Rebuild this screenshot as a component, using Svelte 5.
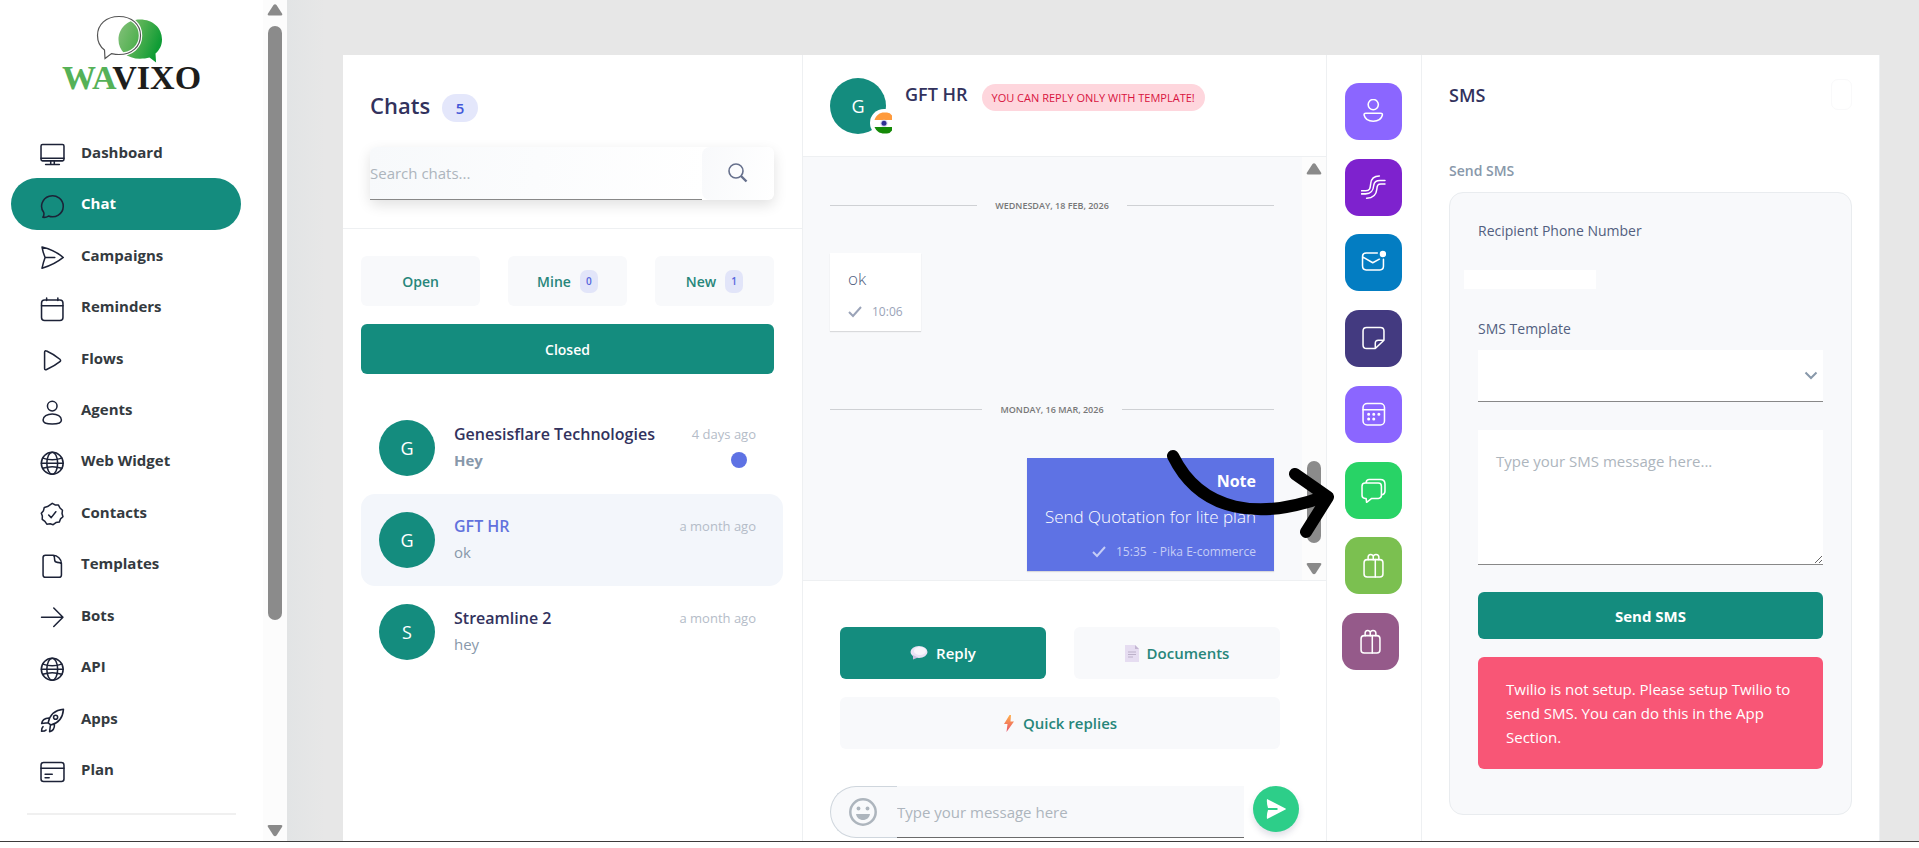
<script>
  const nav = [
    ['Dashboard', 'monitor'],
    ['Chat', 'bubble'],
    ['Campaigns', 'send'],
    ['Reminders', 'calendar'],
    ['Flows', 'play'],
    ['Agents', 'person'],
    ['Web Widget', 'globe'],
    ['Contacts', 'verified'],
    ['Templates', 'file'],
    ['Bots', 'arrow'],
    ['API', 'globe'],
    ['Apps', 'rocket'],
    ['Plan', 'card']
  ];

  const icons = {
    monitor: '<rect x="1" y="2.5" width="22.500" height="16" rx="1.500"/><path d="M1 16h22.500M10.500 18.500v3M14 18.500v3M5.500 22h13.500"/>',
    bubble: '<path d="M2.800 22.800c.9-1.300 1.300-3 .9-4.600A10.600 10.300 0 1 1 8.300 21.600c-1.500 1-3.500 1.500-5.500 1.200z"/>',
    send: '<path d="M2 2c6.500 1.700 15.500 5.500 20.800 10.200C17.500 16.500 9 20.800 2 22.800c.7-3.600 1.600-7 3-10.600C3.600 8.800 2.600 5.500 2 2zM5 12.200h9.500"/>',
    calendar: '<rect x="1.500" y="3" width="21" height="20" rx="3"/><path d="M1.500 8.500h21M6.500 1v2.500M17.500 1v2.500"/>',
    play: '<path d="M4.500 4.200c0-1.300 1-1.700 2-1.200 4.800 2.200 9 4.700 13 8 .9.800.9 1.700 0 2.400-3.900 3.200-8.200 5.500-13 7.700-1.100.5-2 .1-2-1.100z"/>',
    person: '<circle cx="12" cy="6" r="4.700"/><path d="M3 19.500c0-3.300 4-5.800 9-5.800s9 2.500 9 5.800c0 2.600-2.500 4-9 4s-9-1.400-9-4z"/>',
    globe: '<circle cx="12" cy="12" r="10.700"/><ellipse cx="12" cy="12" rx="5.300" ry="10.700"/><path d="M2.600 7c6 2 12.800 2 18.800 0M2.600 17c6-2 12.800-2 18.800 0M1.300 12h21.400"/>',
    verified: '<path d="M12 1.300l2.800 1.600 3.300.1 1.500 2.900 2.400 2.200-.4 3.200.9 3.100-2.400 2.200-1.200 3.100-3.300.5-2.700 2-2.900-.9-3.300.4-1.900-2.700-2.600-1.900.1-3.300L1.300 11l2.100-2.500.8-3.200 3.200-.8z"/><path d="M8.500 12.700l2.500 2.600 4.500-5.800"/>',
    file: '<path d="M3 3.500C3 1.800 3.600 1.200 5.300 1.200h7.700c4 0 8 3.800 8 8v11.300c0 1.700-.7 2.300-2.300 2.300H5.300C3.600 22.800 3 22.200 3 20.500zM13 1.200c1.500 1 1.300 3 1.300 4.300 0 2 .7 2.700 2.700 2.700 1.500 0 3 0 4 1.500"/>',
    arrow: '<path d="M1.500 12h21M13.500 3l9 9-9 9"/>',
    rocket: '<path d="M8 14.500C9.500 7.500 14.500 2 23 1.300c-.7 8.200-5.500 13.800-12.500 15.300zM8.800 9.700c-4 .2-6.800 2.100-7.200 5.600l6.200-.8M14.200 15.600c.2 4-1.500 6.700-4.800 7.600l.8-6.400M3 18.300c-1 .8-1.500 2.700-1.500 4.500 1.800 0 3.700-.2 4.500-1.200"/><circle cx="15.300" cy="9" r="2"/>',
    card: '<rect x="1" y="2.500" width="22.500" height="18.500" rx="2.500"/><path d="M1 8h22.500M5 14h7M5 17.300h4"/>',
    user2: '<circle cx="12" cy="5.500" r="5"/><path d="M4.800 14h14.400c1.500 0 2 .7 1.700 1.900-.8 3.300-4 5.800-8.900 5.800s-8.100-2.500-8.900-5.800c-.3-1.200.2-1.900 1.700-1.900z"/>',
    waves: '<path d="M.5 15.500h4c4.500 0 4.500-3 5-7C10 3.500 13.500 1 18 1M.5 18.500h4c6 0 7.500-3.500 8-8.500.5-3.500 2.500-4.700 6-4.700h5M5.500 22.700c6 0 9.500-3 10-8.700.3-4 1-5.200 4-5.200h4"/>',
    mail: '<path d="M16 3H5C2.500 3 1.500 4.200 1.500 6.500v9C1.500 18 2.700 19.500 5 19.500h13.500c2.500 0 3.500-1.300 3.500-3.500V9M2 7l9.500 5.500L18 9"/><circle cx="21.500" cy="4" r="2.400" fill="currentColor"/>',
    note: '<path d="M22.500 14V5c0-2.200-1-3.500-3.500-3.500H5.500C3 1.500 2 2.800 2 5v13.500C2 21 3 22 5.500 22H14zM14 22v-5c0-2.200 1-3 3-3h5.500"/>',
    agenda: '<rect x="2" y="1.500" width="21" height="21" rx="4"/><path d="M2 7.500h21"/><path d="M7.500 12h.01M12.500 12h.01M17.500 12h.01M7.500 16.700h.01M12.500 16.700h.01" stroke-width="3"/>',
    chats: '<path d="M4 5h13c2 0 3 1 3 3v9c0 2-1 3-3 3h-6.500L5.500 23.800 5 20H4c-2 0-3-1-3-3V8c0-2 1-3 3-3zM5 4.500c.2-2 1.200-3 3-3h11c3 0 4.500 1.500 4.500 4.500v7c0 2-.8 3-2.800 3.300"/>',
    gift: '<rect x="3" y="6.500" width="18.500" height="17" rx="3"/><path d="M14 6.500v17M7 6.500V4c0-3 5-3.500 5 0v2.500M12 6.500V4c0-3.500 5.500-3 5.500 0v2.500"/>'
  };

  const chats = [
    { initial: 'G', name: 'Genesisflare Technologies', text: 'Hey', time: '4 days ago', unread: true },
    { initial: 'G', name: 'GFT HR', text: 'ok', time: 'a month ago', active: true },
    { initial: 'S', name: 'Streamline 2', text: 'hey', time: 'a month ago' }
  ];

  const tools = [
    ['Contact', 'user2', '#8b66ff'],
    ['Streams', 'waves', '#7e22ce'],
    ['Email', 'mail', '#037dc2'],
    ['Notes', 'note', '#433a80'],
    ['Calendar', 'agenda', '#8b66ff'],
    ['SMS', 'chats', '#28d366'],
    ['Shopify', 'gift', '#7bc050'],
    ['WooCommerce', 'gift', '#955a8a']
  ];
</script>

{#snippet icon(name, size, weight)}
  <svg class="icon" width={size} height={size} viewBox="0 0 24.500 24.500" fill="none" stroke="currentColor" stroke-width={weight} stroke-linecap="round" stroke-linejoin="round" aria-hidden="true">{@html icons[name]}</svg>
{/snippet}

{#snippet tick()}
  <svg width="14" height="12" viewBox="0 0 14 12" fill="none" stroke="currentColor" stroke-width="2" aria-hidden="true"><path d="M1 6l4 4 8-9" /></svg>
{/snippet}

{#snippet scrollArrow(down)}
  <svg width="16" height="12" viewBox="0 0 16 12" fill="#8a8a8a" aria-hidden="true">
    {#if down}<path d="M2 0h12q2 0 1 2L9.500 10.500q-1.500 1.500-3 0L1 2Q0 0 2 0z" />
    {:else}<path d="M2 11.500h12q2 0 1-2L9.500 1Q8-.5 6.500 1L1 9.500q-1 2 1 2z" />{/if}
  </svg>
{/snippet}

<div class="page">
  <div class="shell">
    <aside class="sidebar">
      <div class="menu">
        <a class="logo" href="#home">
          <svg width="68" height="50" viewBox="97 14 68 50" overflow="visible" aria-hidden="true">
            <defs>
              <linearGradient id="leaf" x1="0" y1="0" x2="1" y2="0.400">
                <stop offset="0" stop-color="#86c17c" />
                <stop offset="0.500" stop-color="#56b254" />
                <stop offset="1" stop-color="#0f9c35" />
              </linearGradient>
            </defs>
            <path d="M139 19.500c13 0 22 8.500 22 20 0 6-2.500 10.500-6.500 14l.6 9-6.600-5c-3 .8-6 1.200-9.500 1.200-13 0-21.500-8-21.500-19s8.500-20.200 21.500-20.200z" fill="url(#leaf)" />
            <path d="M118 16.500c13 0 21.500 8 21.500 19s-8.500 19-21.500 19c-3 0-5.500-.5-7.500-.9l-6.500 5-.5-8.600C99.500 47 96.500 41.500 96.500 35.500c0-11 8.500-19 21.500-19z" fill="none" stroke="#fff" stroke-width="3.500" />
            <path d="M118 16.500c13 0 21.500 8 21.500 19s-8.500 19-21.500 19c-3 0-5.500-.5-7.500-.9l-6.500 5-.5-8.600C99.500 47 96.500 41.500 96.500 35.500c0-11 8.500-19 21.500-19z" fill="none" stroke="#555" stroke-width="1.200" />
          </svg>
          <span class="wordmark"><span class="green">WA</span>VIXO</span>
        </a>
        <nav>
          {#each nav as [label, name]}
            <a href="#{name}" class:current={label === 'Chat'}>
              {@render icon(name, 25, 1.5)}
              <span>{label}</span>
            </a>
          {/each}
        </nav>
        <hr />
      </div>
      <div class="scroll">
        {@render scrollArrow(false)}
        <div class="thumb tall"></div>
        {@render scrollArrow(true)}
      </div>
    </aside>

    <main>
      <section class="chats">
        <header>
          <div class="title">
            <h1>Chats</h1>
            <span class="count">5</span>
          </div>
          <form class="search">
            <input type="text" placeholder="Search chats..." aria-label="Search chats" />
            <button type="button" aria-label="Search">
              <svg width="20" height="20" viewBox="0 0 20 20" fill="none" stroke="#66708c" aria-hidden="true">
                <circle cx="8" cy="8" r="7" stroke-width="1.600" />
                <path d="M13 13l5.500 5.500" stroke-width="2.400" />
              </svg>
            </button>
          </form>
        </header>
        <div class="filters">
          <button type="button">Open</button>
          <button type="button">Mine <span class="mini">0</span></button>
          <button type="button">New <span class="mini">1</span></button>
          <button type="button" class="primary wide">Closed</button>
        </div>
        <ul class="list">
          {#each chats as c}
            <li class:active={c.active}>
              <span class="avatar">{c.initial}</span>
              <div class="who">
                <strong>{c.name}</strong>
                <span class:unread={c.unread}>{c.text}</span>
              </div>
              <div class="when">
                <time>{c.time}</time>
                {#if c.unread}<i class="dot"></i>{/if}
              </div>
            </li>
          {/each}
        </ul>
      </section>

      <section class="talk">
        <header>
          <span class="avatar">
            G
            <svg class="flag" width="22" height="28" viewBox="0 0 22 28" aria-hidden="true">
              <path d="M22 0H14A14 14 0 0 0 14 28H22z" fill="#fff" />
              <path d="M4.500 11C6 6 10 3.500 14 3.500h3q3 0 5 3V11z" fill="#ff9a3c" />
              <path d="M4.500 18H22v3.500q-2 3-5 3h-3C10 24.500 6.500 22.500 4.500 18z" fill="#158a08" />
              <circle cx="14" cy="14.300" r="3.600" fill="#d9d9ef" />
              <circle cx="14" cy="14.300" r="2.500" fill="#2f2f93" />
            </svg>
          </span>
          <h2>GFT HR</h2>
          <span class="warn">YOU CAN REPLY ONLY WITH TEMPLATE!</span>
        </header>
        <div class="history">
          <div class="messages">
            <div class="day"><span>WEDNESDAY, 18 FEB, 2026</span></div>
            <div class="msg">
              <p>ok</p>
              <small>{@render tick()} 10:06</small>
            </div>
            <div class="day"><span>MONDAY, 16 MAR, 2026</span></div>
            <div class="msg note">
              <b>Note</b>
              <p>Send Quotation for lite plan</p>
              <small>{@render tick()} 15:35 &nbsp;- Pika E-commerce</small>
            </div>
          </div>
          <div class="scroll">
            {@render scrollArrow(false)}
            <div class="thumb short"></div>
            {@render scrollArrow(true)}
          </div>
        </div>
        <div class="actions">
          <button type="button" class="primary">
            <svg width="18" height="14" viewBox="0 0 18 14" aria-hidden="true">
              <ellipse cx="9" cy="6" rx="8.500" ry="6" fill="#e9e2f4" />
              <path d="M3 9v4.500l5-2z" fill="#cbbfe0" />
              <ellipse cx="10" cy="5" rx="6" ry="4" fill="#f8f5fc" />
            </svg>
            Reply
          </button>
          <button type="button">
            <svg width="14" height="17" viewBox="0 0 14 17" aria-hidden="true">
              <path d="M0 0h10l4 4v13H0z" fill="#e6ddf1" />
              <path d="M10 0v4h4z" fill="#c3b6d2" />
              <path d="M3 7h8M3 9.500h8M3 12h5" stroke="#bcb1c9" />
            </svg>
            Documents
          </button>
          <button type="button" class="wide">
            <svg width="12" height="17" viewBox="0 0 12 17" aria-hidden="true">
              <defs>
                <linearGradient id="bolt" x2="0" y2="1">
                  <stop offset="0" stop-color="#ffb04a" />
                  <stop offset="1" stop-color="#e8506a" />
                </linearGradient>
              </defs>
              <path d="M6.500 0L1 9h3.500L3.500 17 11 6.500H7.500L8 0z" fill="url(#bolt)" />
            </svg>
            Quick replies
          </button>
        </div>
        <form class="compose">
          <button type="button" class="smile" aria-label="Emoji">
            <svg width="28" height="28" viewBox="0 0 28 28" aria-hidden="true">
              <circle cx="14" cy="14" r="12.700" fill="none" stroke="#adb5bd" stroke-width="2.500" />
              <circle cx="9.500" cy="10.500" r="1.900" fill="#adb5bd" />
              <circle cx="18.500" cy="10.500" r="1.900" fill="#adb5bd" />
              <path d="M7 16h14c-.6 3.700-3.500 6-7 6s-6.400-2.300-7-6z" fill="#adb5bd" />
            </svg>
          </button>
          <input type="text" placeholder="Type your message here" aria-label="Message" />
          <button type="button" class="send" aria-label="Send">
            <svg width="20" height="20" viewBox="0 0 20 20" fill="#fff" aria-hidden="true">
              <path d="M1 0l18.500 9.500c.6.300.6.700 0 1L1 20c-.4-3.300 0-6 1-9h9.500V9H2C1 6 .6 3 1 0z" />
            </svg>
          </button>
        </form>
      </section>

      <section class="tools" aria-label="Side apps">
        {#each tools as [label, name, color]}
          <button type="button" aria-label={label} style:background={color}>{@render icon(name, 25, 1.5)}</button>
        {/each}
      </section>

      <section class="sms">
        <header>
          <h2>SMS</h2>
          <button type="button" class="close" aria-label="Close"></button>
        </header>
        <h3>Send SMS</h3>
        <form class="panel">
          <span class="caption">Recipient Phone Number</span>
          <div class="phone"></div>
          <label for="template">SMS Template</label>
          <div class="select">
            <select id="template"><option></option></select>
            <svg width="14" height="10" viewBox="0 0 14 10" fill="none" stroke="#8898aa" stroke-width="2" aria-hidden="true"><path d="M1.500 1.500L7 7l5.500-5.500" /></svg>
          </div>
          <textarea placeholder="Type your SMS message here..." aria-label="SMS message"></textarea>
          <button type="button" class="primary">Send SMS</button>
          <p class="alert">Twilio is not setup. Please setup Twilio to send SMS. You can do this in the App Section.</p>
        </form>
      </section>
      <svg class="pointer" width="176" height="96" viewBox="0 0 176 96" fill="none" stroke="#000" stroke-width="12" stroke-linecap="round" stroke-linejoin="round" aria-hidden="true">
        <path d="M10 10C38 67 97 74 160 51" />
        <path d="M132 28l33 23-22 35" />
      </svg>
    </main>
  </div>
</div>

<style>
  :global(body) {
    margin: 0;
    overflow: hidden;
  }
  .page, .page * {
    box-sizing: border-box;
  }
  .page {
    --teal: #148c7e;
    --soft: #f8f9fb;
    --line: #eef0f2;
    --ink: #32325d;
    height: 100vh;
    padding-bottom: 6px;
    background: #fff;
    font-family: "Open Sans", "Noto Sans", sans-serif;
    font-size: 15px;
    color: #525f7f;
  }
  button, input, select, textarea {
    font: inherit;
    border: 0;
    outline: 0;
  }
  button {
    cursor: pointer;
    padding: 0;
  }
  h1, h2, h3, p, ul {
    margin: 0;
    padding: 0;
    font-weight: 400;
  }
  svg {
    flex: none;
    display: block;
  }
  .shell {
    display: flex;
    height: 100%;
    overflow: hidden;
    border-bottom: 1px solid #3c3c3c;
    background: linear-gradient(90deg, #e2e4e5 287px, #e7e7e7 325px);
  }

  .sidebar {
    flex: none;
    width: 287px;
    display: flex;
    background: #fff;
  }
  .menu {
    flex: 1;
  }
  .logo {
    display: flex;
    flex-direction: column;
    align-items: center;
    height: 127px;
    padding: 14px 0 0;
    text-decoration: none;
  }
  .wordmark {
    font: bold 34px/28px "Liberation Serif", serif;
    color: #1d1d1b;
  }
  .green {
    color: #55b157;
  }
  nav {
    display: grid;
    grid-auto-rows: 1fr;
    height: 669px;
    padding: 0 22px 0 11px;
  }
  nav a {
    display: flex;
    align-items: center;
    gap: 16px;
    padding: 0 0 2px 29px;
    border-radius: 26px;
    font-weight: 700;
    color: #343a40;
    text-decoration: none;
  }
  nav .icon {
    margin-top: 6px;
    color: #1c2237;
  }
  nav .current {
    background: var(--teal);
    color: #fff;
  }
  hr {
    margin: 17px 27px 0;
    border: 0;
    border-top: 2px solid #f0f0f0;
  }
  .scroll {
    flex: none;
    width: 24px;
    display: flex;
    flex-direction: column;
    align-items: center;
    padding: 4px 0;
    background: #fcfcfc;
  }
  .thumb {
    width: 14px;
    border-radius: 7px;
    background: #8b8b8b;
    margin: 10px 0 auto;
  }
  .tall {
    height: calc(100% - 239px);
  }
  .short {
    height: 82px;
    margin: auto 0 20px;
  }

  main {
    position: relative;
    flex: 1;
    display: grid;
    grid-template-columns: 460fr 524fr 94fr 459fr;
    margin: 55px 39px 0 56px;
    background: #fff;
  }
  section {
    min-width: 0;
    border-right: 1px solid var(--line);
  }
  .avatar {
    flex: none;
    position: relative;
    width: 56px;
    height: 56px;
    display: grid;
    place-items: center;
    border-radius: 50%;
    background: var(--teal);
    color: #fff;
    font-size: 18px;
  }

  .chats header {
    height: 174px;
    padding: 34px 28px 0 27px;
    border-bottom: 1px solid var(--line);
  }
  .title {
    display: flex;
    align-items: center;
    gap: 12px;
    height: 32px;
  }
  h1 {
    font-size: 22px;
    line-height: 32px;
    font-weight: 600;
    color: var(--ink);
  }
  .count {
    width: 36px;
    margin-top: 5px;
    border-radius: 14px;
    background: #e4e7fb;
    color: #4357d8;
    font-weight: 600;
    line-height: 28px;
    text-align: center;
  }
  .search {
    display: flex;
    height: 53px;
    margin-top: 26px;
    border-radius: 6px;
    box-shadow: 0 5px 14px rgba(0, 0, 0, .12);
  }
  .search input {
    flex: 1;
    min-width: 0;
    padding: 0;
    border-bottom: 1px solid #888;
    border-radius: 6px 0 0 0;
    background: linear-gradient(100deg, #f7f9fb, #fff);
  }
  ::placeholder {
    color: #adb5bd;
    opacity: 1;
  }
  .search button {
    display: grid;
    place-items: center;
    width: 72px;
    padding-bottom: 2px;
    border-radius: 8px;
    background: linear-gradient(100deg, #f8f9fb, #fff);
  }
  .filters {
    display: grid;
    grid-template-columns: repeat(3, 1fr);
    gap: 18px 28px;
    padding: 27px 28px 28px 18px;
  }
  .filters button, .actions button, .panel button {
    display: flex;
    align-items: center;
    justify-content: center;
    height: 50px;
    border-radius: 6px;
    background: var(--soft);
    color: #27867a;
    font-size: 14px;
    font-weight: 600;
  }
  .page .primary {
    background: var(--teal);
    color: #fff;
  }
  .page .wide {
    grid-column: 1 / -1;
  }
  .mini {
    min-width: 18px;
    margin-left: 9px;
    border-radius: 7px;
    background: #e2e5f9;
    color: #5566dd;
    font-size: 10px;
    line-height: 23px;
    text-align: center;
  }
  .list {
    list-style: none;
    padding: 0 19px 0 18px;
  }
  .list li {
    display: flex;
    gap: 19px;
    height: 92px;
    padding: 18px 27px 18px 18px;
    border-radius: 14px;
  }
  .list .active {
    background: #f3f6fb;
  }
  .who, .when {
    display: flex;
    flex-direction: column;
    gap: 2px;
    padding-top: 2px;
    line-height: 24px;
    color: #8898aa;
    white-space: nowrap;
  }
  .who {
    flex: 1;
    min-width: 0;
  }
  .who strong {
    font-size: 16px;
    font-weight: 600;
    color: var(--ink);
  }
  .list .active strong {
    color: #6272dd;
  }
  .unread {
    font-weight: 700;
  }
  .when {
    align-items: flex-end;
    font-size: 13px;
    color: #b4bcc8;
  }
  .dot {
    width: 16px;
    height: 16px;
    margin: 4px 9px;
    border-radius: 50%;
    background: #5e72e4;
  }

  .talk {
    display: flex;
    flex-direction: column;
  }
  .talk header {
    display: flex;
    align-items: flex-start;
    height: 102px;
    padding: 23px 27px;
    border-bottom: 1px solid var(--line);
  }
  .flag {
    position: absolute;
    right: -6px;
    bottom: -3px;
  }
  h2 {
    font-size: 18px;
    line-height: 32px;
    font-weight: 600;
    color: var(--ink);
  }
  .talk h2 {
    margin: 0 14px 0 19px;
  }
  .warn {
    margin-top: 6px;
    padding: 0 10px;
    border-radius: 14px;
    background: #fed6dd;
    color: #d8143f;
    font-size: 11px;
    line-height: 27px;
    white-space: nowrap;
  }
  .history {
    display: flex;
    height: 424px;
    background: var(--soft);
    border-bottom: 1px solid var(--line);
  }
  .history .scroll {
    padding: 6px 0 5px;
  }
  .messages {
    flex: 1;
    display: flex;
    flex-direction: column;
    align-items: flex-start;
    padding: 38px 28px 0 27px;
  }
  .day {
    align-self: stretch;
    display: flex;
    align-items: center;
    gap: 18px;
    height: 20px;
    color: #777;
    font-size: 9px;
    font-weight: 600;
    white-space: nowrap;
  }
  .day::before, .day::after {
    content: "";
    flex: 1;
    height: 1px;
    background: #cfd1d4;
  }
  .msg {
    height: 78px;
    margin: 38px 0 68px;
    padding: 12px 18px;
    background: #fff;
    box-shadow: 0 1px 1px rgba(0, 0, 0, .12);
  }
  .msg p {
    font-size: 17px;
    line-height: 28px;
    font-weight: 300;
  }
  .msg small {
    display: flex;
    align-items: center;
    gap: 10px;
    margin-top: 9px;
    font-size: 12px;
    line-height: 20px;
    color: #9aa3b8;
    white-space: nowrap;
  }
  .page .note {
    align-self: flex-end;
    height: 113px;
    padding: 11px 18px;
    background: #5e72e4;
    color: #fff;
    text-align: right;
  }
  .note b {
    display: block;
    font-size: 16px;
    line-height: 24px;
  }
  .note p {
    margin-top: 10px;
  }
  .note small {
    justify-content: flex-end;
    margin-top: 11px;
    color: #c5cdf6;
  }
  .day + .note {
    margin: 39px 0 0;
  }
  .actions {
    display: grid;
    grid-template-columns: 1fr 1fr;
    gap: 18px 28px;
    padding: 46px 46px 37px 37px;
  }
  .actions button {
    gap: 8px;
    height: 52px;
    font-size: 15px;
  }
  .compose {
    display: flex;
    height: 52px;
    padding: 0 27px;
  }
  .compose input {
    flex: 1;
    min-width: 0;
    padding: 0;
    border-bottom: 1px solid #6b6b6b;
    background: var(--soft);
  }
  .smile {
    width: 67px;
    padding-left: 18px;
    border: solid #cfd6dd;
    border-width: 1px 0 1px 1px;
    border-radius: 26px 0 0 26px;
    background: var(--soft);
  }
  .send {
    display: grid;
    place-items: center;
    width: 46px;
    height: 46px;
    margin-left: 9px;
    border-radius: 50%;
    background: #2dce89;
    box-shadow: 0 4px 6px rgba(50, 50, 93, .15);
  }

  .tools {
    display: flex;
    flex-direction: column;
    justify-content: space-between;
    height: 615px;
    padding: 28px 18px 0 18px;
    border: 0;
  }
  .tools button {
    display: grid;
    place-items: center;
    width: 57px;
    height: 57px;
    border-radius: 14px;
    color: #fff;
  }
  .tools button:last-child {
    margin-left: -3px;
  }

  .sms {
    padding: 24px 27px;
    border-left: 1px solid var(--line);
  }
  .sms header {
    display: flex;
    justify-content: space-between;
    height: 78px;
  }
  .close {
    width: 21px;
    height: 31px;
    border: 1px solid #f9f9fa;
    border-radius: 7px;
    background: #fff;
  }
  h3 {
    font-size: 14px;
    line-height: 28px;
    font-weight: 600;
    color: #8898aa;
  }
  .panel {
    display: flex;
    flex-direction: column;
    height: 623px;
    margin-top: 7px;
    padding: 26px 28px;
    border: 1px solid #e9ecef;
    border-radius: 14px;
    background: var(--soft);
  }
  .caption, label {
    font-size: 14px;
    line-height: 24px;
  }
  .phone {
    width: 132px;
    height: 19px;
    margin: 27px 0 28px -14px;
    background: #fff;
  }
  .select {
    display: grid;
    align-items: center;
    justify-items: end;
    margin: 9px 0 28px;
  }
  .select > * {
    grid-area: 1 / 1;
  }
  .select svg {
    margin-right: 5px;
    pointer-events: none;
  }
  select {
    width: 100%;
    height: 52px;
    appearance: none;
    border-bottom: 1px solid #888;
    background: #fff;
  }
  textarea {
    height: 135px;
    padding: 19px 18px;
    border-bottom: 1px solid #888;
    background: #fff;
    line-height: 24px;
  }
  .panel button {
    height: 47px;
    margin: 27px 0 18px;
    font-size: 15px;
    font-weight: 700;
  }
  .alert {
    padding: 20px 28px;
    border-radius: 6px;
    background: #f85676;
    color: #fff;
    line-height: 24px;
  }
  .pointer {
    position: absolute;
    left: 820px;
    top: 391px;
  }
</style>
